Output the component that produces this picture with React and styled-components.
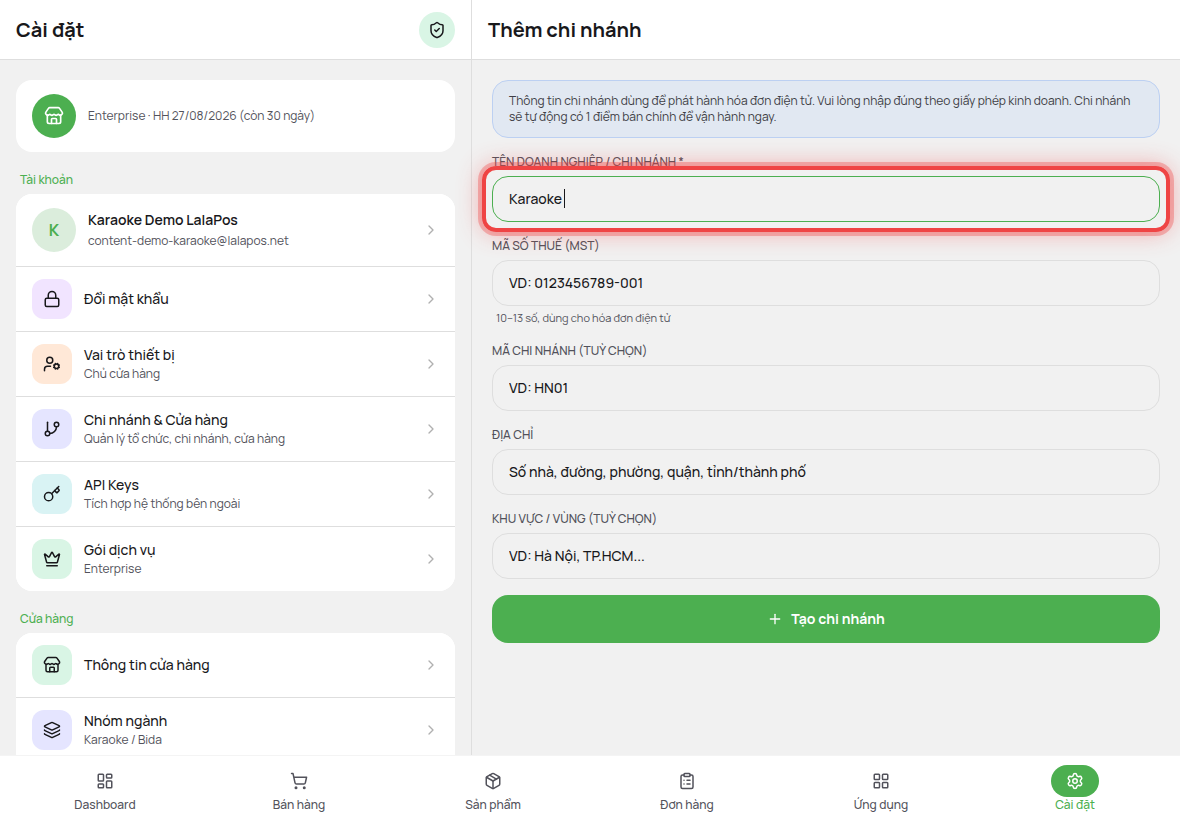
import React, { useEffect, useRef } from 'react';
import styled, { createGlobalStyle } from 'styled-components';
import {
	ChevronRight,
	ClipboardList,
	Crown,
	GitBranch,
	Key,
	Layers,
	LayoutDashboard,
	LayoutGrid,
	Lock,
	Package,
	Plus,
	Settings,
	ShieldCheck,
	ShoppingCart,
	Store,
	UserCog
} from 'lucide-react';

const GlobalStyle = createGlobalStyle`
	:root {
		--green: #4caf50;
		--ink: #18181b;
		--muted: #52525b;
		--line: #dedede;
		--page: #f1f1f1;
	}

	* {
		box-sizing: border-box;
	}

	body {
		margin: 0;
		background-color: var(--page);
		color: var(--ink);
		font-family: Manrope, Inter, 'Noto Sans', sans-serif;
		font-size: 14px;
		line-height: 20px;
	}

	button, input {
		font: inherit;
		color: inherit;
	}
`;

const StyledApp = styled.div`
	display: flex;
	flex-direction: column;
	height: 100vh;
`;

const Panes = styled.div`
	display: grid;
	grid-template-columns: 2fr 3fr;
	flex: 1;
	min-height: 0;
`;

const Sidebar = styled.aside`
	display: flex;
	flex-direction: column;
	min-height: 0;
	border-right: 1px solid var(--line);
`;

const Main = styled.main`
	min-width: 0;
`;

const Header = styled.header`
	display: flex;
	flex-shrink: 0;
	align-items: center;
	justify-content: space-between;
	height: 60px;
	padding: 0 16px;
	background-color: white;
	border-bottom: 1px solid var(--line);

	h1, h2 {
		margin: 0;
		font-size: 20px;
		font-weight: 700;
		line-height: 28px;
	}
`;

const ShieldButton = styled.button`
	display: grid;
	place-items: center;
	width: 36px;
	height: 36px;
	padding: 0;
	border: 0;
	border-radius: 50%;
	background-color: #d9f5e5;
`;

const SidebarBody = styled.div`
	flex: 1;
	min-height: 0;
	padding: 20px 16px 0;
	overflow: hidden;
`;

const Card = styled.section`
	border-radius: ${props => (props.$open ? '16px 16px 0 0' : '16px')};
	background-color: white;
	overflow: hidden;
`;

const SectionTitle = styled.h3`
	margin: 20px 4px 6px;
	color: var(--green);
	font-size: 12px;
	font-weight: 500;
	line-height: 16px;
`;

const Row = styled.button`
	display: flex;
	align-items: center;
	gap: 12px;
	width: 100%;
	padding: 12px 16px;
	border: 0;
	background-color: white;
	font-weight: 500;
	text-align: left;

	& + & {
		border-top: 1px solid var(--line);
	}

	> svg {
		color: #b0b0b0;
	}
`;

const AccountRow = styled(Row)`
	padding: 14px 16px;
	font-weight: 600;
`;

const PlanRow = styled.div`
	display: flex;
	align-items: center;
	gap: 12px;
	padding: 14px 16px;
`;

const Avatar = styled.span`
	display: grid;
	place-items: center;
	flex-shrink: 0;
	width: 44px;
	height: 44px;
	border-radius: 50%;
	background-color: ${props => (props.$solid ? 'var(--green)' : '#dbeddc')};
	color: ${props => (props.$solid ? 'white' : 'var(--green)')};
	font-size: 16px;
	font-weight: 700;
`;

const IconTile = styled.span`
	display: grid;
	place-items: center;
	flex-shrink: 0;
	width: 40px;
	height: 40px;
	border-radius: 12px;
	background-color: ${props => props.$tint};
`;

const RowText = styled.span`
	display: flex;
	flex: 1;
	flex-direction: column;
	gap: ${props => (props.$loose ? '2px' : '0')};
	min-width: 0;
`;

const RowNote = styled.small`
	color: var(--muted);
	font-size: 12px;
	font-weight: 400;
	line-height: 18px;
`;

const Form = styled.form`
	display: flex;
	flex-direction: column;
	gap: 16px;
	padding: 20px;
`;

const Notice = styled.p`
	margin: 0;
	padding: 12px 16px;
	border: 1px solid #bcd0f2;
	border-radius: 16px;
	background-color: #e1e8f2;
	color: #3f3f46;
	font-size: 12px;
	line-height: 16px;
`;

const StyledField = styled.div`
	display: flex;
	flex-direction: column;

	label {
		margin-bottom: 6px;
		color: var(--muted);
		font-size: 12px;
		font-weight: 500;
		line-height: 16px;
		text-transform: uppercase;
	}

	input {
		width: 100%;
		height: 46px;
		padding: 0 16px 2px;
		border: 1px solid var(--line);
		border-radius: 16px;
		outline: none;
		background-color: transparent;
		font-weight: 500;
		caret-color: transparent;
	}

	input:focus {
		border-color: var(--green);
	}

	input::placeholder {
		color: var(--ink);
		opacity: 1;
	}

	small {
		margin: 4px 4px 1px;
		color: var(--muted);
		font-size: 11px;
		line-height: 16px;
	}
`;

const InputWrap = styled.div`
	position: relative;
`;

const Highlight = styled.span`
	position: absolute;
	inset: -10px;
	z-index: 2;
	border: 4px solid #ef4444;
	border-radius: 14px;
	box-shadow: 0 0 0 4px rgba(239, 68, 68, 0.35), 0 0 24px rgba(239, 68, 68, 0.45);
	pointer-events: none;
`;

const Caret = styled.span`
	position: absolute;
	top: 13px;
	left: 72px;
	width: 1px;
	height: 19px;
	background-color: var(--ink);
	pointer-events: none;
`;

const SubmitButton = styled.button`
	display: flex;
	align-items: center;
	justify-content: center;
	gap: 8px;
	height: 48px;
	border: 0;
	border-radius: 16px;
	background-color: var(--green);
	color: white;
	font-weight: 700;
`;

const BottomNav = styled.nav`
	display: flex;
	flex-shrink: 0;
	height: 65px;
	padding: 0 8px;
	border-top: 1px solid #f4f4f4;
	background-color: white;
`;

const NavItem = styled.a`
	display: flex;
	flex: 1;
	flex-direction: column;
	align-items: center;
	padding-top: 9px;
	color: ${props => (props.$active ? 'var(--green)' : 'var(--muted)')};
	font-size: 12px;
	font-weight: 500;
	line-height: 16px;
	text-decoration: none;

	span {
		display: grid;
		place-items: center;
		width: 48px;
		height: 32px;
		border-radius: 16px;
		background-color: ${props => (props.$active ? 'var(--green)' : 'transparent')};
		color: ${props => (props.$active ? 'white' : 'inherit')};
	}
`;

const accountItems = [
	{ title: 'Đổi mật khẩu', icon: Lock, tint: '#f1e4ff' },
	{ title: 'Vai trò thiết bị', note: 'Chủ cửa hàng', icon: UserCog, tint: '#ffe8d7' },
	{
		title : 'Chi nhánh & Cửa hàng',
		note  : 'Quản lý tổ chức, chi nhánh, cửa hàng',
		icon  : GitBranch,
		tint  : '#e5e5ff'
	},
	{ title: 'API Keys', note: 'Tích hợp hệ thống bên ngoài', icon: Key, tint: '#d9f3f4' },
	{ title: 'Gói dịch vụ', note: 'Enterprise', icon: Crown, tint: '#d9f5e5' }
];

const storeItems = [
	{ title: 'Thông tin cửa hàng', icon: Store, tint: '#d9f5e5' },
	{ title: 'Nhóm ngành', note: 'Karaoke / Bida', icon: Layers, tint: '#e5e5ff' }
];

const navItems = [
	{ title: 'Dashboard', icon: LayoutDashboard },
	{ title: 'Bán hàng', icon: ShoppingCart },
	{ title: 'Sản phẩm', icon: Package },
	{ title: 'Đơn hàng', icon: ClipboardList },
	{ title: 'Ứng dụng', icon: LayoutGrid },
	{ title: 'Cài đặt', icon: Settings, active: true }
];

const SettingRow = ({ item }) => {
	const Icon = item.icon;

	return (
		<Row type='button'>
			<IconTile $tint={item.tint}>
				<Icon size={18} />
			</IconTile>
			<RowText>
				{item.title}
				{item.note && <RowNote>{item.note}</RowNote>}
			</RowText>
			<ChevronRight size={16} />
		</Row>
	);
};

const Field = ({ id, label, hint, highlighted, inputRef, ...rest }) => (
	<StyledField>
		<label htmlFor={id}>{label}</label>
		<InputWrap>
			<input id={id} type='text' ref={inputRef} {...rest} />
			{highlighted && <Caret />}
			{highlighted && <Highlight />}
		</InputWrap>
		{hint && <small>{hint}</small>}
	</StyledField>
);

const BranchForm = () => {
	const nameRef = useRef(null);

	useEffect(() => {
		const input = nameRef.current;
		input.focus();
		input.setSelectionRange(input.value.length, input.value.length);
	}, []);

	return (
		<Form onSubmit={e => e.preventDefault()}>
			<Notice>
				Thông tin chi nhánh dùng để phát hành hóa đơn điện tử. Vui lòng nhập
				đúng theo giấy phép kinh doanh. Chi nhánh sẽ tự động có 1 điểm bán
				chính để vận hành ngay.
			</Notice>
			<Field
				id='name'
				label='Tên doanh nghiệp / Chi nhánh *'
				defaultValue='Karaoke'
				inputRef={nameRef}
				highlighted
			/>
			<Field
				id='tax'
				label='Mã số thuế (MST)'
				placeholder='VD: 0123456789-001'
				hint='10–13 số, dùng cho hóa đơn điện tử'
			/>
			<Field id='code' label='Mã chi nhánh (tuỳ chọn)' placeholder='VD: HN01' />
			<Field
				id='address'
				label='Địa chỉ'
				placeholder='Số nhà, đường, phường, quận, tỉnh/thành phố'
			/>
			<Field
				id='area'
				label='Khu vực / Vùng (tuỳ chọn)'
				placeholder='VD: Hà Nội, TP.HCM...'
			/>
			<SubmitButton type='submit'>
				<Plus size={16} />
				Tạo chi nhánh
			</SubmitButton>
		</Form>
	);
};

const App = () => (
	<StyledApp>
		<GlobalStyle />
		<Panes>
			<Sidebar>
				<Header>
					<h1>Cài đặt</h1>
					<ShieldButton type='button' aria-label='Bảo mật'>
						<ShieldCheck size={18} />
					</ShieldButton>
				</Header>
				<SidebarBody>
					<Card>
						<PlanRow>
							<Avatar $solid>
								<Store size={20} />
							</Avatar>
							<RowNote>Enterprise · HH 27/08/2026 (còn 30 ngày)</RowNote>
						</PlanRow>
					</Card>

					<SectionTitle>Tài khoản</SectionTitle>
					<Card>
						<AccountRow type='button'>
							<Avatar>K</Avatar>
							<RowText $loose>
								Karaoke Demo LalaPos
								<RowNote>content-demo-karaoke@lalapos.net</RowNote>
							</RowText>
							<ChevronRight size={16} />
						</AccountRow>
						{accountItems.map(item => (
							<SettingRow key={item.title} item={item} />
						))}
					</Card>

					<SectionTitle>Cửa hàng</SectionTitle>
					<Card $open>
						{storeItems.map(item => (
							<SettingRow key={item.title} item={item} />
						))}
					</Card>
				</SidebarBody>
			</Sidebar>

			<Main>
				<Header>
					<h2>Thêm chi nhánh</h2>
				</Header>
				<BranchForm />
			</Main>
		</Panes>

		<BottomNav>
			{navItems.map(({ title, icon: Icon, active }) => (
				<NavItem key={title} href='#' $active={active}>
					<span>
						<Icon size={18} />
					</span>
					{title}
				</NavItem>
			))}
		</BottomNav>
	</StyledApp>
);

export default App;
